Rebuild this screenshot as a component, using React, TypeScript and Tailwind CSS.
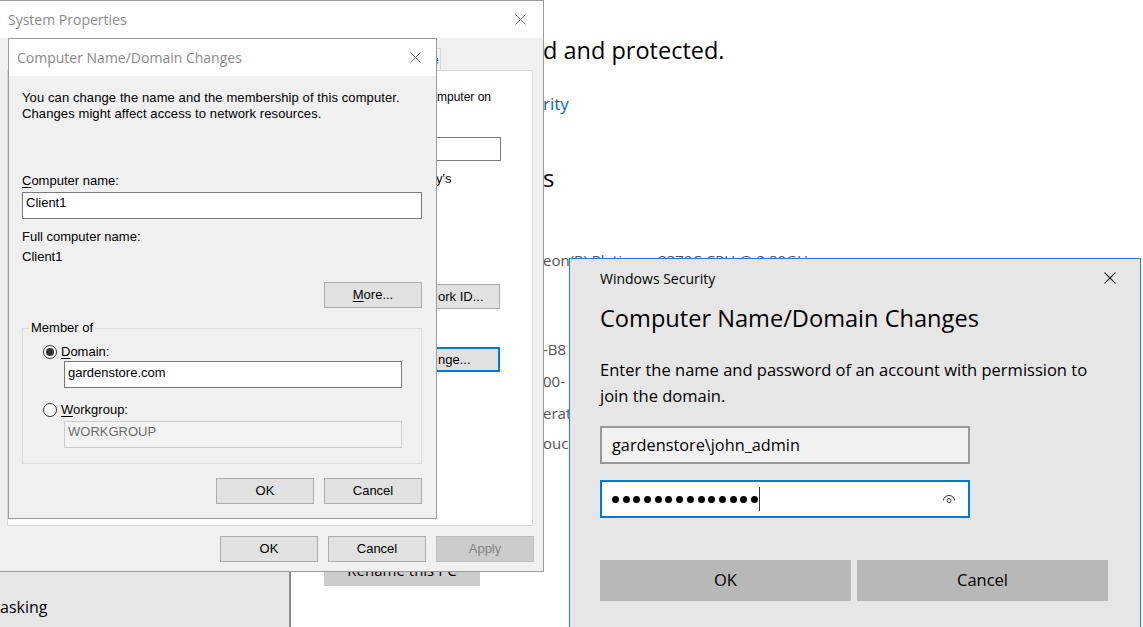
import React from 'react';

const segoe = "font-['Open_Sans','Noto_Sans',sans-serif]";
const msSans = "font-['Liberation_Sans',Arial,sans-serif]";

const CloseGlyph = ({ color, size = 11 }: { color: string; size?: number }) => (
  <svg width={size} height={size} viewBox="0 0 11 11" fill="none">
    <path d="M0.5 0.5L10.5 10.5M10.5 0.5L0.5 10.5" stroke={color} strokeWidth="1" />
  </svg>
);

const Radio = ({ checked }: { checked?: boolean }) => (
  <span className="w-[14px] h-[14px] rounded-full border border-[#333] bg-white flex items-center justify-center shrink-0">
    {checked && <span className="w-[8px] h-[8px] rounded-full bg-[#333]" />}
  </span>
);

const ClassicButton = ({ children, disabled }: { children: React.ReactNode; disabled?: boolean }) => (
  <div
    className={
      disabled
        ? 'w-[98px] h-[26px] bg-[#cccccc] border border-[#bfbfbf] text-[#838383] flex items-center justify-center'
        : 'w-[98px] h-[26px] bg-[#e1e1e1] border border-[#adadad] text-black flex items-center justify-center'
    }
  >
    {children}
  </div>
);

const EyeGlyph = () => (
  <svg width="14" height="10" viewBox="0 0 14 10" fill="none">
    <path d="M1.5 6.5A5.5 5 0 0 1 12.5 6.5" stroke="#333" strokeWidth="1" />
    <circle cx="7" cy="6.5" r="2" stroke="#333" strokeWidth="1" />
  </svg>
);

export default function App() {
  return (
    <div className="relative w-[1143px] h-[627px] overflow-hidden bg-white flex">
      {/* settings page behind the dialogs */}
      <div className={`w-[289px] h-full bg-[#e6e6e6] flex flex-col justify-end pb-[8px] ${segoe}`}>
        <span className="text-[16px] leading-[24px] text-black">asking</span>
      </div>
      <div className="w-[2px] h-full bg-[#8a8a8a]" />
      <div className={`flex-1 flex flex-col pl-[33px] pt-[34px] ${segoe}`}>
        <div className="ml-[219px] h-[32px] text-[23.5px] leading-[32px] text-black whitespace-nowrap">d and protected.</div>
        <div className="ml-[219px] mt-[26px] h-[24px] text-[17px] leading-[24px] text-[#0067b8]">rity</div>
        <div className="ml-[219px] mt-[46px] h-[32px] text-[24px] leading-[32px] text-black">s</div>
        <div className="ml-[219px] mt-[56px] h-[20px] text-[15px] leading-[20px] text-[#555] whitespace-nowrap">
          eon(R) Platinum 8370C CPU @ 2.80GHz
        </div>
        <div className="ml-[219px] mt-[69px] h-[20px] text-[15px] leading-[20px] text-[#555] whitespace-nowrap">-B8</div>
        <div className="ml-[219px] mt-[12px] h-[20px] text-[15px] leading-[20px] text-[#555] whitespace-nowrap">00-</div>
        <div className="ml-[219px] mt-[12px] h-[20px] text-[15px] leading-[20px] text-[#555] whitespace-nowrap">erat</div>
        <div className="ml-[219px] mt-[10px] h-[20px] text-[15px] leading-[20px] text-[#555] whitespace-nowrap">ouc</div>
        <div className="mt-[101px] w-[156px] h-[32px] bg-[#cccccc] text-[15px] text-black flex items-center justify-center">
          Rename this PC
        </div>
      </div>

      {/* System Properties */}
      <div className={`absolute left-0 top-0 w-[544px] h-[572px] border-t border-r border-b border-[#9b9b9b] bg-[#f0f0f0] flex flex-col text-[13px] leading-[16px] text-black ${msSans}`}>
        <div className="h-[37px] shrink-0 bg-white flex items-center justify-between pl-[8px] pr-[17px]">
          <span className={`${segoe} text-[14px] text-[#8a8a8a]`}>System Properties</span>
          <CloseGlyph color="#707070" />
        </div>
        <div className="h-[32px] shrink-0 flex items-end pl-[391px]">
          <div className="w-[50px] h-[22px] border border-b-0 border-[#d9d9d9] text-[#1a5fb4] flex items-center justify-center">
            Remote
          </div>
        </div>
        <div className="ml-[7px] w-[526px] h-[456px] shrink-0 bg-white border border-[#d9d9d9] flex flex-col pl-[416px]">
          <div className="mt-[18px] pl-[13px] whitespace-nowrap text-[12px]">mputer on</div>
          <div className="mt-[32px] w-[77px] h-[24px] border border-[#7a7a7a] bg-white" />
          <div className="mt-[10px] pl-[12px]">y's</div>
          <div className="mt-[97px] w-[76px] h-[25px] bg-[#e1e1e1] border border-[#adadad] flex items-center pl-[13px] whitespace-nowrap">
            ork ID...
          </div>
          <div className="mt-[38px] w-[76px] h-[25px] bg-[#e1e1e1] border-2 border-[#0078d7] flex items-center pl-[12px] whitespace-nowrap">
            nge...
          </div>
        </div>
        <div className="mt-[10px] flex justify-end gap-[10px] pr-[9px]">
          <ClassicButton>OK</ClassicButton>
          <ClassicButton>Cancel</ClassicButton>
          <ClassicButton disabled>Apply</ClassicButton>
        </div>
      </div>

      {/* Computer Name/Domain Changes */}
      <div className={`absolute left-[8px] top-[38px] w-[429px] h-[481px] border border-[#9b9b9b] bg-[#f0f0f0] flex flex-col text-[13px] leading-[16px] text-black ${msSans}`}>
        <div className="h-[37px] shrink-0 bg-white flex items-center justify-between pl-[8px] pr-[15px]">
          <span className={`${segoe} text-[14px] text-[#8a8a8a]`}>Computer Name/Domain Changes</span>
          <CloseGlyph color="#707070" />
        </div>
        <div className="w-[413px] pl-[13px] flex flex-col">
          <p className="mt-[14px] whitespace-nowrap tracking-[0.1px]">
            You can change the name and the membership of this computer.
            <br />
            Changes might affect access to network resources.
          </p>
          <div className="mt-[51px]">
            <span className="underline underline-offset-2">C</span>omputer name:
          </div>
          <div className="mt-[3px] w-[400px] h-[27px] border border-[#7a7a7a] bg-white pl-[3px] pt-[2px]">Client1</div>
          <div className="mt-[10px]">Full computer name:</div>
          <div className="mt-[4px]">Client1</div>
          <div className="mt-[17px] self-end">
            <ClassicButton>
              <span>
                <span className="underline underline-offset-2">M</span>ore...
              </span>
            </ClassicButton>
          </div>
          <fieldset className="mt-[12px] w-[400px] border border-[#dcdcdc]">
            <legend className="ml-[6px] px-[2px]">Member of</legend>
            <div className="flex flex-col pb-[15px]">
              <div className="mt-[8px] pl-[20px] flex items-center gap-[4px] h-[16px]">
                <Radio checked />
                <span>
                  <span className="underline underline-offset-2">D</span>omain:
                </span>
              </div>
              <div className="mt-[1px] ml-[41px] w-[338px] h-[27px] border border-[#7a7a7a] bg-white pl-[3px] pt-[3px]">
                gardenstore.com
              </div>
              <div className="mt-[14px] pl-[20px] flex items-center gap-[4px] h-[16px]">
                <Radio />
                <span>
                  <span className="underline underline-offset-2">W</span>orkgroup:
                </span>
              </div>
              <div className="mt-[3px] ml-[41px] w-[338px] h-[27px] border border-[#cccccc] bg-[#f3f3f3] pl-[3px] pt-[2px] text-[#6d6d6d]">
                WORKGROUP
              </div>
            </div>
          </fieldset>
          <div className="mt-[14px] self-end flex gap-[10px]">
            <ClassicButton>OK</ClassicButton>
            <ClassicButton>Cancel</ClassicButton>
          </div>
        </div>
      </div>

      {/* Windows Security */}
      <div className={`absolute left-[569px] top-[258px] w-[572px] h-[380px] border border-[#1883d7] bg-[#e6e6e6] flex flex-col pl-[30px] text-black ${segoe}`}>
        <div className="mt-[9px] h-[20px] flex items-center justify-between pr-[24px]">
          <span className="text-[14px]">Windows Security</span>
          <CloseGlyph color="#111" size={12} />
        </div>
        <div className="mt-[14px] h-[32px] text-[23.6px] leading-[32px] whitespace-nowrap">Computer Name/Domain Changes</div>
        <p className="mt-[23px] text-[16.5px] leading-[26px] whitespace-nowrap">
          Enter the name and password of an account with permission to
          <br />
          join the domain.
        </p>
        <div className="mt-[17px] w-[370px] h-[38px] border-2 border-[#999] bg-[#f2f2f2] pl-[10px] flex items-center text-[16.3px]">
          gardenstore\john_admin
        </div>
        <div className="mt-[16px] w-[370px] h-[38px] border-2 border-[#0078d7] bg-white pl-[10px] pr-[12px] flex items-center">
          <div className="flex items-center gap-[3.7px]">
            {Array.from({ length: 14 }).map((_, i) => (
              <span key={i} className="w-[7px] h-[7px] rounded-full bg-black" />
            ))}
          </div>
          <span className="ml-[1px] w-[1.5px] h-[24px] bg-[#333]" />
          <span className="ml-auto">
            <EyeGlyph />
          </span>
        </div>
        <div className="mt-[42px] flex gap-[6px]">
          <div className="w-[251px] h-[41px] bg-[#b8b8b8] text-[16.5px] flex items-center justify-center">OK</div>
          <div className="w-[251px] h-[41px] bg-[#b8b8b8] text-[16.5px] flex items-center justify-center">Cancel</div>
        </div>
      </div>
    </div>
  );
}
